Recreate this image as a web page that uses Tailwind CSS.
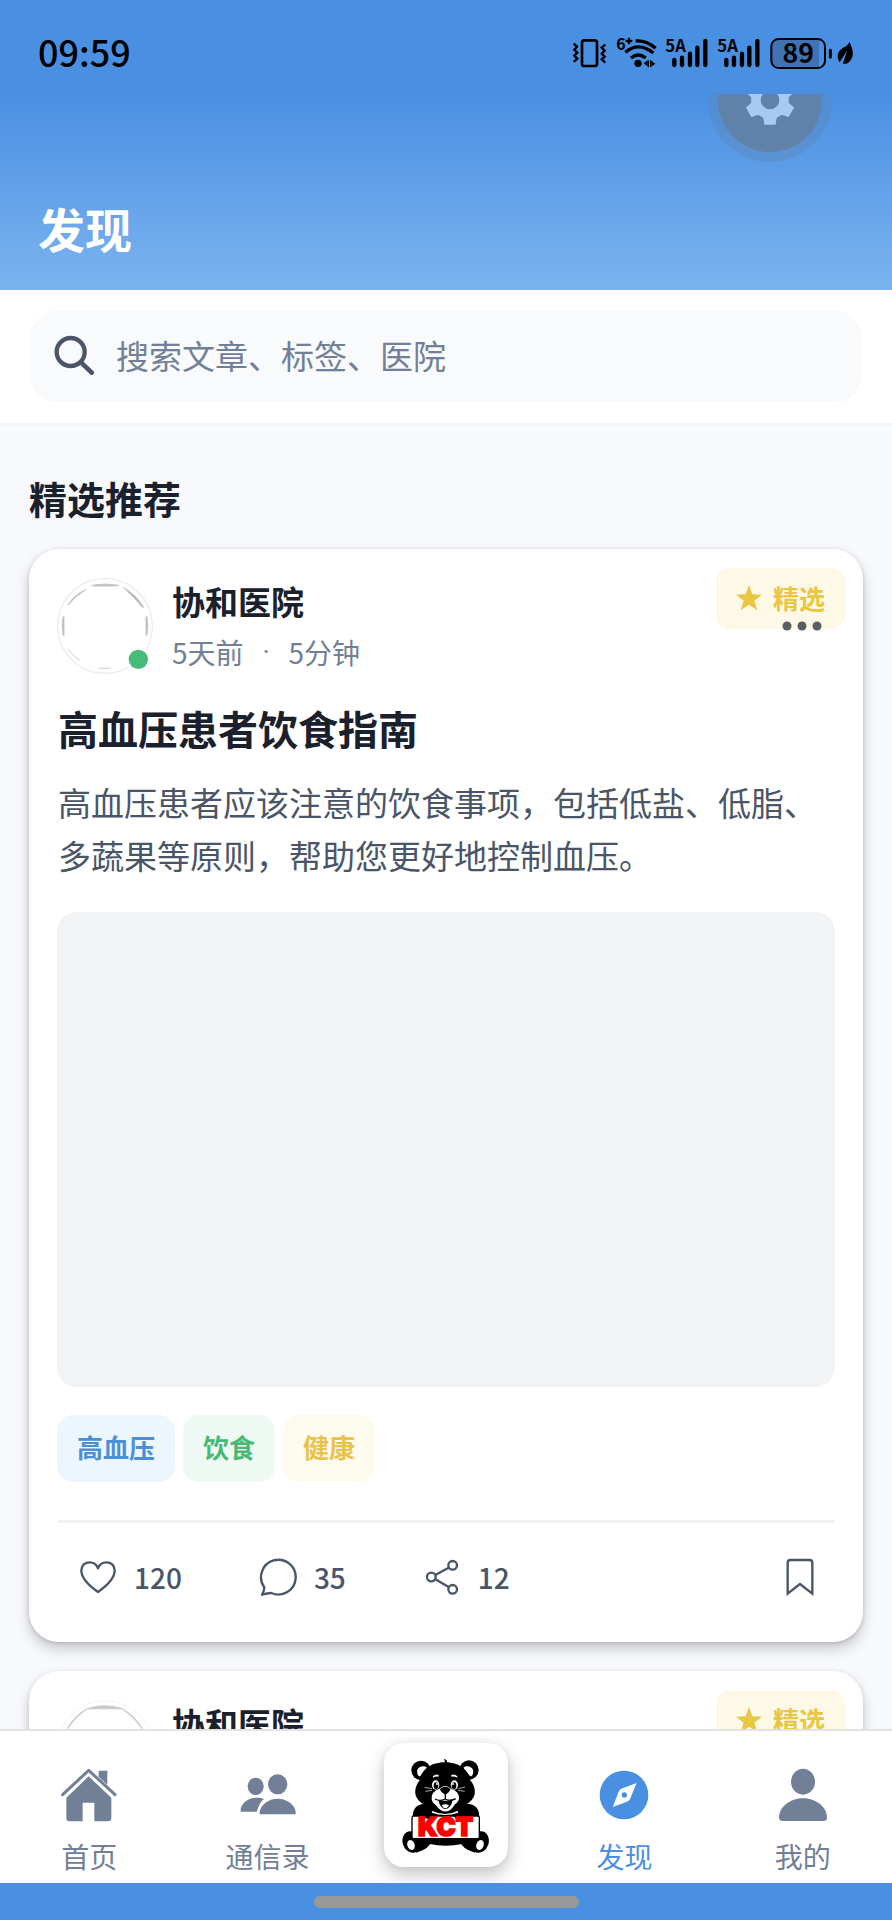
<!DOCTYPE html>
<html lang="zh-CN">
<head>
<meta charset="utf-8">
<meta name="viewport" content="width=device-width, initial-scale=1">
<title>发现</title>
<script src="https://cdn.jsdelivr.net/npm/@tailwindcss/browser@4"></script>
</head>
<body class="h-screen flex flex-col overflow-hidden bg-[#f8f9fd] text-[#1a202c] font-['Noto_Sans_CJK_SC',sans-serif]">

<!-- Device status bar -->
<div class="shrink-0 h-[94px] bg-[#4a90e2] text-black flex items-center justify-between pl-[38px] pr-[38px] pt-3">
  <time class="text-[36px] leading-9 pb-1 font-medium">09:59</time>
  <div class="flex items-center gap-[9px]">
    <svg class="w-[35px] h-[35px] overflow-visible" viewBox="90 111 105 105" fill="none" stroke="currentColor" aria-label="振动">
      <rect x="120" y="124" width="45" height="77" rx="7" stroke-width="8"/>
      <path d="M95 134l10 9-8 9 9 9-9 9 9 9-11 10M190 137l-11 9 9 9-9 9 9 9-9 8 11 10" stroke-width="7"/>
    </svg>
    <svg class="w-[41px] h-[35px] overflow-visible" viewBox="222 111 123 105" fill="none" stroke="currentColor" aria-label="Wi-Fi">
      <text x="223" y="153" font-size="48" font-weight="700" fill="currentColor" stroke="none">6</text>
      <path d="M251 126h20M261 116v20" stroke-width="7"/>
      <path d="M281 126c24-2 42 6 60 22M250 160c25-22 55-22 84 2M267 177c15-12 29-12 44 0" stroke-width="10"/>
      <circle cx="288" cy="193" r="11" fill="currentColor" stroke="none"/>
      <path d="M305 193l12-9v18zM340 194l-12-9v18z" fill="currentColor" stroke="none"/>
      <path d="M319 184v20M326 184v20" stroke-width="4"/>
    </svg>
    <svg class="w-[43px] h-[35px] overflow-visible" viewBox="372 111 129 105" stroke="currentColor" aria-label="卡一信号">
      <text x="370" y="159" font-size="50" font-weight="700" fill="currentColor" stroke="none">5A</text>
      <path d="M397 183v15M420 176v22M444 164v34M466 146v52M490 126v72" stroke-width="13" stroke-linecap="round"/>
    </svg>
    <svg class="w-[43px] h-[35px] overflow-visible" viewBox="372 111 129 105" stroke="currentColor" aria-label="卡二信号">
      <text x="370" y="159" font-size="50" font-weight="700" fill="currentColor" stroke="none">5A</text>
      <path d="M397 183v15M420 176v22M444 164v34M466 146v52M490 126v72" stroke-width="13" stroke-linecap="round"/>
    </svg>
    <div class="flex items-center gap-[5px]">
      <svg class="w-[62px] h-[35px] overflow-visible" viewBox="690 111 186 105" aria-label="电量">
        <rect x="694" y="120" width="161" height="87" rx="22" fill="#4a90e2"/>
        <path d="M716 120H837V207H716a22 22 0 0 1-22-22V142a22 22 0 0 1 22-22z" fill="#3f73b3"/>
        <rect x="694" y="120" width="161" height="87" rx="22" fill="none" stroke="currentColor" stroke-width="6"/>
        <path d="M871 154v20" stroke="currentColor" stroke-width="9" stroke-linecap="round"/>
        <text x="775" y="193" text-anchor="middle" font-size="80" font-weight="700" fill="currentColor">89</text>
      </svg>
      <svg class="w-[17px] h-[35px]" viewBox="891 111 51 105" fill="currentColor" aria-label="省电">
        <path d="M928 128c14 26 14 46 0 60-6 6-13 7-20 6l14-40-23 36c-11-18-6-32 8-42 10-7 18-9 21-20z"/>
      </svg>
    </div>
  </div>
</div>

<!-- Page header -->
<header class="shrink-0 relative overflow-hidden h-[196px] bg-linear-to-b from-[#4a90e2] to-[#7bb3f0] flex items-end px-[38px] pb-[38px]">
  <h1 class="text-[47px] leading-[48px] font-bold text-white">发现</h1>
  <button type="button" aria-label="设置" class="absolute -top-[46px] right-[70px] size-[104px] rounded-full bg-[#5f81aa] ring-[10px] ring-[#5c84b8]/40 flex items-center justify-center">
    <svg class="size-[52px]" viewBox="-78 -78 156 156" fill="#a8c9f2" aria-hidden="true">
      <defs><path id="tooth" d="M-29 47Q-20 50-19 60L-17 74H17L19 60Q20 50 29 47V30H-29z"/></defs>
      <path fill-rule="evenodd" d="M0-56a56 56 0 1 1 0 112a56 56 0 1 1 0-112zM0-28a28 28 0 1 0 0 56a28 28 0 1 0 0-56z"/>
      <use href="#tooth"/><use href="#tooth" transform="rotate(60)"/><use href="#tooth" transform="rotate(120)"/>
      <use href="#tooth" transform="rotate(180)"/><use href="#tooth" transform="rotate(240)"/><use href="#tooth" transform="rotate(300)"/>
    </svg>
  </button>
</header>

<!-- Search -->
<form role="search" class="shrink-0 bg-white px-[30px] py-5">
  <label class="flex items-center h-[93px] rounded-[28px] bg-[#f9fafc] pl-6 pr-6 pb-[3px] gap-[22px]">
    <svg class="shrink-0 size-10" viewBox="162 168 120 120" fill="none" stroke="#4a5568" aria-hidden="true">
      <circle cx="212" cy="219" r="42" stroke-width="13"/>
      <path d="M243 250l32 31" stroke-width="14" stroke-linecap="round"/>
    </svg>
    <span class="sr-only">搜索</span>
    <input type="search" placeholder="搜索文章、标签、医院" class="grow min-w-0 h-14 bg-transparent outline-none text-[33px] leading-[48px] placeholder:text-[#718096]">
  </label>
</form>

<!-- Feed -->
<main class="grow min-h-0 overflow-hidden border-t-2 border-[#f3f4f7] px-[29px] pt-[49px]">
  <h2 class="text-[38px] leading-[48px] font-bold mb-[27px]">精选推荐</h2>

  <div class="flex flex-col gap-[29px]">
    <article class="relative rounded-[30px] bg-white px-7 pt-[29px] shadow-[0_7px_14px_rgba(0,0,0,0.2),0_1px_4px_rgba(0,0,0,0.14)]">
      <span class="absolute top-[19px] right-[18px] h-[61px] rounded-[14px] bg-[#fef8e7] text-[#e9c644] px-5 pb-[2px] flex items-center gap-[11px] text-[26px] leading-9 font-bold">
        <svg class="size-[26px]" viewBox="0 0 78 78" fill="currentColor" aria-hidden="true"><path d="M39 0l10 28 29 1-23 18 9 29-25-17-25 17 9-29L0 29l29-1z"/></svg>精选
      </span>
      <div class="flex items-center gap-[19px]">
        <svg class="shrink-0 size-24" viewBox="171 114 288 288" fill="none" role="img" aria-label="协和医院头像">
          <circle cx="315" cy="258" r="142" stroke="#ececec" stroke-width="4"/>
          <path d="M275 136Q315 128 356 136L350 138H281zM370 143Q408 162 431 202L427 202Q400 168 370 143zM203 195Q222 165 258 148Q228 168 203 195zM189 230Q184 258 189 286L192 286V230zM441 230Q446 258 441 286L438 286V230z" fill="#b5b5b5" stroke="#c9c9c9" stroke-width="3"/>
          <path d="M295 385h35M205 328q14 20 35 34" stroke="#cfcfcf" stroke-width="3"/>
          <circle cx="415" cy="358" r="37" fill="#fff"/>
          <circle cx="415" cy="358" r="29" fill="#48bb78"/>
        </svg>
        <div class="flex flex-col gap-[11px]">
          <h3 class="text-[33px] leading-10 font-bold">协和医院</h3>
          <p class="flex text-[28px] leading-10 text-[#718096]"><span>5天前</span><span class="w-[45px] text-center font-[Roboto]">·</span><span>5分钟</span></p>
        </div>
        <button type="button" aria-label="更多" class="relative z-10 ml-auto mr-[13px]">
          <svg class="w-10 h-3" viewBox="0 0 40 12" fill="#5a5f63"><circle cx="5" cy="6" r="4.5"/><circle cx="20" cy="6" r="4.5"/><circle cx="35" cy="6" r="4.5"/></svg>
        </button>
      </div>
      <h3 class="mt-7 pl-px text-[40px] leading-[52px] font-bold">高血压患者饮食指南</h3>
      <p class="mt-[22px] pl-px text-[33px] leading-[53px] text-[#4a5568]">高血压患者应该注意的饮食事项，包括低盐、低脂、多蔬果等原则，帮助您更好地控制血压。</p>
      <div class="mt-[30px] aspect-[778/475] rounded-[20px] bg-[#f2f3f5]"></div>
      <div class="mt-7 flex gap-2 text-[26px] leading-9 font-bold">
        <a href="#" class="flex items-center h-[67px] px-5 pb-[3px] rounded-[16px] bg-[#edf5fd] text-[#4a90d9]">高血压</a>
        <a href="#" class="flex items-center h-[67px] px-5 pb-[3px] rounded-[16px] bg-[#eef9f3] text-[#48b877]">饮食</a>
        <a href="#" class="flex items-center h-[67px] px-5 pb-[3px] rounded-[16px] bg-[#fdfaee] text-[#e8c24a]">健康</a>
      </div>
      <div class="mt-[38px] border-t-[3px] border-[#f1f2f4] pt-[34px] pb-[45px] pl-[21px] pr-[15px] flex items-center gap-[76px] text-[28px] leading-10 font-medium text-[#4a5568]">
        <button type="button" aria-label="点赞 120" class="flex items-center gap-4">
          <svg class="size-10" viewBox="233 593 120 120" fill="none" stroke="currentColor" stroke-width="7" stroke-linejoin="round"><path d="M293 698C264 678 243 655 243 633C243 618 254 609 268 609C280 609 289 615 293 627C297 615 306 609 318 609C332 609 343 618 343 633C343 655 322 678 293 698z"/></svg>120
        </button>
        <button type="button" aria-label="评论 35" class="flex items-center gap-4">
          <svg class="size-10" viewBox="778 593 120 120" fill="none" stroke="currentColor" stroke-width="7" stroke-linejoin="round"><path d="M797 684A52 52 0 1 1 818 701Q805 702 790 706Q797 695 797 684z"/></svg>35
        </button>
        <button type="button" aria-label="分享 12" class="flex items-center gap-4">
          <svg class="size-10" viewBox="75 232 120 120" fill="none" stroke="currentColor" stroke-width="7"><circle cx="103" cy="292" r="13"/><circle cx="167" cy="257" r="13"/><circle cx="167" cy="329" r="13"/><path d="M115 286l40-22M115 299l40 23"/></svg>12
        </button>
        <button type="button" aria-label="收藏" class="ml-auto">
          <svg class="size-10" viewBox="1140 232 120 120" fill="none" stroke="currentColor" stroke-width="7"><path d="M1163 342V249Q1163 241 1171 241H1229Q1237 241 1237 249V342L1200 313z"/></svg>
        </button>
      </div>
    </article>

    <article class="relative rounded-[30px] bg-white px-7 pt-[29px] pb-11 shadow-[0_7px_14px_rgba(0,0,0,0.2),0_1px_4px_rgba(0,0,0,0.1)]">
      <span class="absolute top-[19px] right-[18px] h-[61px] rounded-[14px] bg-[#fef8e7] text-[#e9c644] px-5 pb-[2px] flex items-center gap-[11px] text-[26px] leading-9 font-bold">
        <svg class="size-[26px]" viewBox="0 0 78 78" fill="currentColor" aria-hidden="true"><path d="M39 0l10 28 29 1-23 18 9 29-25-17-25 17 9-29L0 29l29-1z"/></svg>精选
      </span>
      <div class="flex items-center gap-[19px]">
        <svg class="shrink-0 size-24" viewBox="171 114 288 288" fill="none" role="img" aria-label="协和医院头像">
          <circle cx="315" cy="258" r="142" stroke="#f4f4f4" stroke-width="3"/>
          <path d="M200 200Q222 161 262 138Q315 122 366 138Q406 161 429 200L424 200Q400 165 366 142H262Q228 165 205 200z" fill="#cbcbcb"/>
        </svg>
        <div class="flex flex-col gap-[11px]">
          <h3 class="text-[33px] leading-10 font-bold">协和医院</h3>
          <p class="flex text-[28px] leading-10 text-[#718096]"><span>5天前</span><span class="w-[45px] text-center font-[Roboto]">·</span><span>5分钟</span></p>
        </div>
      </div>
    </article>
  </div>
</main>

<!-- Tab bar -->
<nav class="relative shrink-0 overflow-hidden border-t-2 border-[#e3e3e4] bg-white grid grid-cols-5 text-[28px] leading-9 text-[#718096]">
  <a href="#" class="flex flex-col items-center gap-[15px] pt-9 pb-[9px]">
    <svg class="size-14" viewBox="185 352 168 168" fill="currentColor" aria-hidden="true">
      <path d="M298 363h26v43l-26-25z"/>
      <path d="M190 435L268 362L347 435" fill="none" stroke="currentColor" stroke-width="9" stroke-linecap="round" stroke-linejoin="round"/>
      <path d="M268 380L336 444V505Q336 515 326 515H285V459H250V515H211Q201 515 201 505V444z"/>
    </svg>首页
  </a>
  <a href="#" class="flex flex-col items-center gap-[15px] pt-9 pb-[9px]">
    <svg class="size-14" viewBox="718 352 168 168" fill="currentColor" aria-hidden="true">
      <ellipse cx="765" cy="410" rx="24" ry="26"/><ellipse cx="831" cy="404" rx="29" ry="30"/>
      <path d="M777 494v-8c5-25 30-39 54-39s50 14 54 39v8z"/>
      <path d="M720 486v-9c6-21 26-33 48-33 9 0 16 1 22 4-11 8-16 22-22 38z"/>
    </svg>通信录
  </a>
  <button type="button" aria-label="KCT" class="self-start justify-self-center mt-3 size-[124px] rounded-[20px] bg-white flex items-center justify-center shadow-[0_8px_18px_rgba(60,50,50,0.28),0_0_8px_rgba(0,0,0,0.06)]">
    <svg class="w-[90px] h-[98px]" viewBox="92 138 270 294" aria-hidden="true">
      <path d="M218 162q10-6 2-16q14 2 9 18z"/>
      <circle cx="152" cy="181" r="29"/><circle cx="296" cy="180" r="29"/>
      <path d="M143 196q-8-19 7-26 12-4 20 3-8 12-19 24-4 4-8-1zM306 196q8-19-7-26-12-4-20 3 8 12 19 24 4 4 8-1z" fill="#fff"/>
      <path d="M224 157c48 0 72 28 76 54 12 14 18 34 10 50-8 14-18 22-32 26-10 14-30 24-54 24s-44-10-54-24c-14-4-24-12-32-26-8-16-1-36 10-50 4-26 28-54 76-54z"/>
      <path d="M128 326q-4-38 28-44h142q32 6 28 44z"/>
      <path d="M186 303q38 18 76 0l2 5q-40 14-80 0z" fill="#fff"/>
      <path d="M188 199q8-8 17-4v5q-9-2-17 3zM243 195q10-4 18 4v4q-9-5-18-3z" fill="#fff"/>
      <ellipse cx="196" cy="225" rx="11" ry="14" fill="#fff"/><ellipse cx="252" cy="225" rx="11" ry="14" fill="#fff"/>
      <ellipse cx="197" cy="227" rx="7" ry="10"/><ellipse cx="251" cy="227" rx="7" ry="10"/>
      <circle cx="200" cy="222" r="3" fill="#fff"/><circle cx="248" cy="222" r="3" fill="#fff"/>
      <path d="M207 236q17-16 35 0 27 9 24 32-2 8-13 16-14 22-28 20-14 2-28-18-12-8-13-18-2-24 23-32z" fill="#fff"/>
      <path d="M209 237q15-13 31 0 0 8-15 17-15-8-16-17z"/>
      <path d="M225 252v15M194 267q15 8 30 0 18 8 32-1" fill="none" stroke="#000" stroke-width="4"/>
      <path d="M204 270q20 4 43 0-5 25-22 28-16-3-21-28z"/>
      <path d="M214 286q11-6 22 0-5 9-11 9t-11-9z" fill="#fff"/>
      <path d="M163 232l22 4M165 244l20-3M264 241l19 3M264 236l20-5" stroke="#fff" stroke-width="2"/>
      <ellipse cx="124" cy="396" rx="27" ry="33" transform="rotate(-18 124 396)"/><ellipse cx="328" cy="396" rx="27" ry="33" transform="rotate(18 328 396)"/>
      <path d="M130 380h194v8q-20 10-48 14-50 10-98 0-28-4-48-14z"/>
      <path d="M130 388h56q-8 30-48 40zM322 388h-56q8 30 48 40z"/>
      <ellipse cx="122" cy="405" rx="11" ry="15" fill="#fff" transform="rotate(-20 122 405)"/><ellipse cx="329" cy="405" rx="11" ry="15" fill="#fff" transform="rotate(20 329 405)"/>
      <rect x="125" y="318" width="202" height="68" rx="5" fill="#fff" stroke="#000" stroke-width="4"/>
      <path d="M152 318h50q-3 9-16 7-18 6-34-7zM250 318h50q-16 13-34 7-13 2-16-7z"/>
      <text x="226" y="379" text-anchor="middle" font-family="Inter, sans-serif" font-size="77" font-weight="900" fill="#f00" stroke="#f00" stroke-width="5">KCT</text>
    </svg>
  </button>
  <a href="#" aria-current="page" class="flex flex-col items-center gap-[15px] pt-9 pb-[9px] text-[#4a90e2]">
    <svg class="size-14" viewBox="229 201 168 168" aria-hidden="true">
      <circle cx="313" cy="285" r="73" fill="currentColor"/>
      <path d="M351 249L331 297Q328 303 322 305L279 321L297 275Q299 269 305 266z" fill="#fff"/>
      <circle cx="314" cy="285" r="8" fill="currentColor"/>
    </svg>发现
  </a>
  <a href="#" class="flex flex-col items-center gap-[15px] pt-9 pb-[9px]">
    <svg class="size-14" viewBox="765 202 168 168" fill="currentColor" aria-hidden="true">
      <ellipse cx="849" cy="246" rx="36" ry="39"/>
      <path d="M777 351C780 318 814 296 849 296S918 318 921 351Q922 364 911 364H787Q777 364 777 351z"/>
    </svg>我的
  </a>
</nav>

<!-- Gesture bar -->
<div class="shrink-0 h-[37px] bg-[#4a90e2] flex justify-center items-center">
  <div class="w-[265px] h-3 rounded-full bg-[#999]"></div>
</div>
</body>
</html>
